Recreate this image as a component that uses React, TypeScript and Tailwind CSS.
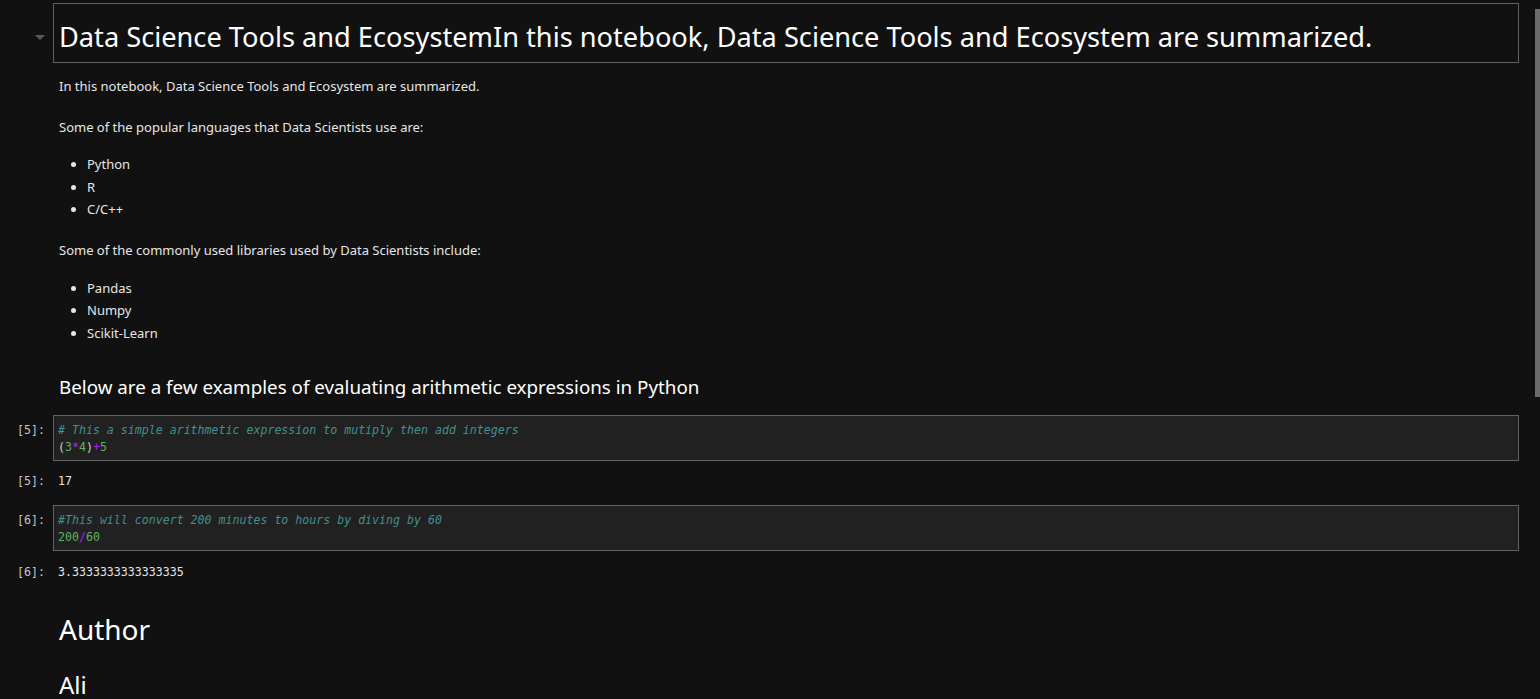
import React from "react";

const sans = { fontFamily: '"Noto Sans", "Open Sans", sans-serif' };
const mono = { fontFamily: '"DejaVu Sans Mono", "Liberation Mono", monospace' };

function Prompt({ n }: { n: number }) {
  return (
    <div className="w-[53px] shrink-0 pr-[8px] text-right text-[11.6px] leading-[17px] text-[#c8c8c8]" style={mono}>
      [{n}]:
    </div>
  );
}

function CodeCell({ n, children }: { n: number; children: React.ReactNode }) {
  return (
    <div className="flex">
      <div className="pt-[7px]"><Prompt n={n} /></div>
      <div className="flex-1 border border-[#616161] bg-[#212121] px-[4px] pt-[6px] pb-[4px] text-[11.6px] leading-[17px] text-[#d4d4d4]" style={mono}>
        {children}
      </div>
    </div>
  );
}

function Output({ n, value }: { n: number; value: string }) {
  return (
    <div className="flex">
      <Prompt n={n} />
      <div className="pl-[5px] text-[11.6px] leading-[17px] text-[#e6e6e6]" style={mono}>{value}</div>
    </div>
  );
}

export default function App() {
  return (
    <div className="flex h-[699px] w-[1540px] overflow-hidden bg-[#111111] text-[#e6e6e6]" style={sans}>
      <div className="flex-1 pr-[16px] pt-[3px]">
        {/* Heading cell */}
        <div className="flex">
          <div className="relative w-[53px] shrink-0">
            <div className="absolute left-[35px] top-[32px] h-0 w-0 border-l-[5px] border-r-[5px] border-t-[5px] border-l-transparent border-r-transparent border-t-[#5a5a5a]" />
          </div>
          <div className="flex h-[60px] flex-1 items-center border border-[#616161] pl-[5px] pt-[7px]">
            <h1 className="text-[27.2px] leading-none text-white">
              Data Science Tools and EcosystemIn this notebook, Data Science Tools and Ecosystem are summarized.
            </h1>
          </div>
        </div>

        {/* Markdown cell */}
        <div className="pl-[59px] text-[13px] leading-[18px] text-[#e6e6e6]">
          <p className="mt-[14px]">In this notebook, Data Science Tools and Ecosystem are summarized.</p>
          <p className="mt-[23px]">Some of the popular languages that Data Scientists use are:</p>
          <ul className="mt-[17px] list-disc pl-[28px] leading-[22.5px]">
            <li>Python</li>
            <li>R</li>
            <li>C/C++</li>
          </ul>
          <p className="mt-[20px]">Some of the commonly used libraries used by Data Scientists include:</p>
          <ul className="mt-[18px] list-disc pl-[28px] leading-[22.5px]">
            <li>Pandas</li>
            <li>Numpy</li>
            <li>Scikit-Learn</li>
          </ul>
          <h3 className="mt-[30px] text-[18.8px] leading-[26px] text-white">
            Below are a few examples of evaluating arithmetic expressions in Python
          </h3>
        </div>

        <div className="mt-[15px]">
          <CodeCell n={5}>
            <div className="italic text-[#3f9090]"># This a simple arithmetic expression to mutiply then add integers</div>
            <div>
              (<span className="text-[#5fb35f]">3</span>
              <span className="text-[#aa22ff]">*</span>
              <span className="text-[#5fb35f]">4</span>)
              <span className="text-[#aa22ff]">+</span>
              <span className="text-[#5fb35f]">5</span>
            </div>
          </CodeCell>
        </div>
        <div className="mt-[12px]">
          <Output n={5} value="17" />
        </div>
        <div className="mt-[15px]">
          <CodeCell n={6}>
            <div className="italic text-[#3f9090]">#This will convert 200 minutes to hours by diving by 60</div>
            <div>
              <span className="text-[#5fb35f]">200</span>
              <span className="text-[#aa22ff]">/</span>
              <span className="text-[#5fb35f]">60</span>
            </div>
          </CodeCell>
        </div>
        <div className="mt-[13px]">
          <Output n={6} value="3.3333333333333335" />
        </div>

        <div className="pl-[59px]">
          <h2 className="mt-[30px] text-[28px] leading-[36px] text-white">Author</h2>
          <h3 className="mt-[23px] text-[24px] leading-[30px] text-white">Ali</h3>
        </div>
      </div>
      <div className="w-[5px] shrink-0 pt-[9px]">
        <div className="h-[388px] bg-[#6b6b6b]" />
      </div>
    </div>
  );
}
